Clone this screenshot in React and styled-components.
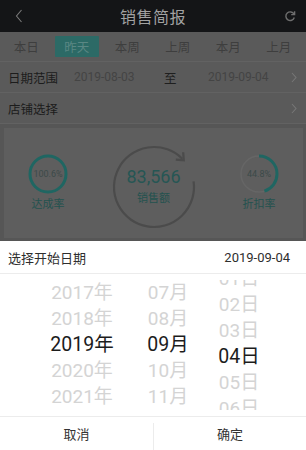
import React from "react";
import styled, { createGlobalStyle } from "styled-components";

const Global = createGlobalStyle`
  html, body { margin: 0; padding: 0; }
  body {
    width: 306px; height: 450px; overflow: hidden;
    font-family: Roboto, "Noto Sans CJK SC", "Noto Sans", sans-serif;
    background: #565656;
  }
  * { box-sizing: border-box; }
`;

const Screen = styled.div`
  width: 306px; height: 450px;
  display: flex; flex-direction: column;
  overflow: hidden;
`;

/* dimmed page under the mask */
const Page = styled.div`
  height: 241px; flex: none;
  display: flex; flex-direction: column;
  background: #565656;
  overflow: hidden;
`;

const Header = styled.div`
  height: 32px; flex: none;
  background: #141517;
  display: grid; grid-template-columns: 40px 1fr 40px;
  align-items: center;
`;
const Title = styled.div`
  text-align: center; color: #a2a2a2; font-size: 16px; letter-spacing: 0.5px;
`;
const IconCell = styled.div`
  display: flex; align-items: center;
  justify-content: ${(p) => (p.$right ? "flex-end" : "flex-start")};
  padding: ${(p) => (p.$right ? "0 10px 0 0" : "0 0 0 15px")};
`;

const Tabs = styled.div`
  height: 30px; flex: none;
  display: grid; grid-template-columns: repeat(6, 1fr);
  align-items: center;
  background: #5a5a5a;
  border-bottom: 1px solid #626262;
  padding: 0 2px 0 1px;
`;
const Tab = styled.div`
  height: 21px; margin: 0 3px;
  display: flex; align-items: center; justify-content: center;
  font-size: 12.5px;
  color: ${(p) => (p.$active ? "#5a8784" : "#3e3e3e")};
  background: ${(p) => (p.$active ? "#2c6a66" : "transparent")};
  border-radius: 1px;
`;

const Row = styled.div`
  height: 31px; flex: none;
  display: flex; align-items: center;
  padding: 0 9px 0 8px;
  background: #5a5a5a;
  border-bottom: 1px solid #626262;
  font-size: 12.5px;
`;
const Label = styled.div`
  width: 66px; color: #1c1c1c;
`;
const DateVal = styled.div`
  width: ${(p) => p.$w}px; color: #444;
  font-size: 12px;
`;
const To = styled.div`
  width: 44px; color: #1f1f1f;
`;
const Spacer = styled.div` flex: 1; `;

const Card = styled.div`
  margin: 4px 3px 0 4px;
  height: 110px; flex: none;
  background: #5e5e5e;
  display: flex; align-items: center; justify-content: space-between;
  padding: 0 9px;
`;
const Stat = styled.div`
  width: 70px;
  display: flex; flex-direction: column; align-items: center; gap: 3px;
  margin-top: -2px;
`;
const RingWrap = styled.div`
  position: relative; width: 42px; height: 42px;
`;
const RingText = styled.div`
  position: absolute; inset: 0;
  display: flex; align-items: center; justify-content: center;
  font-size: 9px; color: #3c4a49;
`;
const StatLabel = styled.div`
  font-size: 11px; color: #24524f; line-height: 14px;
`;
const Big = styled.div`
  position: relative; width: 100px; height: 100px; margin-top: 8px;
`;
const BigText = styled.div`
  position: absolute; inset: 0;
  display: flex; flex-direction: column; align-items: center; justify-content: center;
  gap: 5px; padding-bottom: 2px;
`;
const BigNum = styled.div`
  font-size: 18px; color: #265654; line-height: 20px;
`;
const BigLabel = styled.div`
  font-size: 11px; color: #24524f; line-height: 13px;
`;

/* bottom sheet */
const Sheet = styled.div`
  flex: 1; background: #fff;
  display: flex; flex-direction: column;
`;
const SheetHead = styled.div`
  height: 33px; flex: none;
  display: flex; align-items: center; justify-content: space-between;
  padding: 0 16px 0 8px;
  border-bottom: 1px solid #ececec;
  font-size: 13px; color: #2e2e2e;
`;
const Picker = styled.div`
  padding: 6px 0 6px 42px;
  display: grid; grid-template-columns: 80px 92px 50px;
`;
const Column = styled.div`
  height: 130px; overflow: hidden;
`;
const List = styled.div`
  display: flex; flex-direction: column; align-items: center;
  margin-top: ${(p) => p.$offset || 0}px;
`;
const Item = styled.div`
  height: 26px; line-height: 26px; white-space: nowrap;
  font-size: ${(p) => (p.$sel ? "19.5px" : "19px")};
  color: ${(p) => (p.$sel ? "#1c1c1c" : "#d4d4d4")};
`;
const Buttons = styled.div`
  flex: 1;
  display: grid; grid-template-columns: 153px 1fr;
  border-top: 1px solid #ececec;
`;
const Btn = styled.div`
  display: flex; align-items: center; justify-content: center;
  font-size: 13px; color: #333;
  border-left: ${(p) => (p.$divider ? "1px solid #ececec" : "none")};
  margin: ${(p) => (p.$divider ? "6px 0 0" : "0")};
  padding-bottom: ${(p) => (p.$divider ? "6px" : "0")};
`;

const Chevron = ({ color = "#767676", w = 6, h = 11 }) => (
  <svg width={w} height={h} viewBox="0 0 6 11" fill="none">
    <path d="M1 1l4 4.5L1 10" stroke={color} strokeWidth="1.1" />
  </svg>
);

const Ring = ({ pct, r = 18 }) => {
  const c = 2 * Math.PI * r;
  const len = Math.min(pct, 100) / 100 * c;
  return (
    <svg width="42" height="42" viewBox="0 0 42 42">
      <circle cx="21" cy="21" r={r} fill="none" stroke="#666" strokeWidth="1.5" />
      <circle
        cx="21" cy="21" r={r} fill="none" stroke="#1f6662" strokeWidth="3"
        strokeDasharray={`${len} ${c}`} transform="rotate(-90 21 21)"
      />
    </svg>
  );
};

const rad = (d) => (d * Math.PI) / 180;
const BigRing = () => {
  const cx = 50, cy = 50, r = 40;
  const a0 = -8, a1 = 315;
  const p0 = [cx + r * Math.cos(rad(a0)), cy + r * Math.sin(rad(a0))];
  const p1 = [cx + r * Math.cos(rad(a1)), cy + r * Math.sin(rad(a1))];
  const tip = [p1[0] + 1.5, p1[1] + 1.5];
  return (
    <svg width="100" height="100" viewBox="0 0 100 100" fill="none">
      <path
        d={`M${p0[0]} ${p0[1]} A${r} ${r} 0 1 1 ${p1[0]} ${p1[1]}`}
        stroke="#4b4b4b" strokeWidth="2.2"
      />
      <path
        d={`M${tip[0] - 0.6} ${tip[1] - 8} L${tip[0]} ${tip[1]} L${tip[0] - 8} ${tip[1] - 0.6}`}
        stroke="#4b4b4b" strokeWidth="2.2" strokeLinejoin="miter"
      />
    </svg>
  );
};

const years = ["2017年", "2018年", "2019年", "2020年", "2021年"];
const months = ["07月", "08月", "09月", "10月", "11月"];
const days = ["01日", "02日", "03日", "04日", "05日", "06日"];

export default function App() {
  const tabs = ["本日", "昨天", "本周", "上周", "本月", "上月"];
  return (
    <Screen>
      <Global />
      <Page>
        <Header>
          <IconCell>
            <svg width="8" height="14" viewBox="0 0 8 14" fill="none">
              <path d="M6.5 1L1.5 7l5 6" stroke="#7a7a7a" strokeWidth="1.1" />
            </svg>
          </IconCell>
          <Title>销售简报</Title>
          <IconCell $right>
            <svg width="12" height="12" viewBox="0 0 12 12" fill="none">
              <path d="M10 4.2A4.3 4.3 0 1 0 10.3 7.5" stroke="#6e6e6e" strokeWidth="1.4" />
              <path d="M10.6 1.2v3.4H7.2" stroke="#6e6e6e" strokeWidth="1.4" />
            </svg>
          </IconCell>
        </Header>
        <Tabs>
          {tabs.map((t, i) => (
            <Tab key={t} $active={i === 1}>{t}</Tab>
          ))}
        </Tabs>
        <Row>
          <Label>日期范围</Label>
          <DateVal $w={90}>2019-08-03</DateVal>
          <To>至</To>
          <DateVal $w={80}>2019-09-04</DateVal>
          <Spacer />
          <Chevron />
        </Row>
        <Row>
          <Label>店铺选择</Label>
          <Spacer />
          <Chevron />
        </Row>
        <Card>
          <Stat>
            <RingWrap>
              <Ring pct={100} />
              <RingText>100.6%</RingText>
            </RingWrap>
            <StatLabel>达成率</StatLabel>
          </Stat>
          <Big>
            <BigRing />
            <BigText>
              <BigNum>83,566</BigNum>
              <BigLabel>销售额</BigLabel>
            </BigText>
          </Big>
          <Stat>
            <RingWrap>
              <Ring pct={44.8} />
              <RingText>44.8%</RingText>
            </RingWrap>
            <StatLabel>折扣率</StatLabel>
          </Stat>
        </Card>
      </Page>
      <Sheet>
        <SheetHead>
          <span>选择开始日期</span>
          <span>2019-09-04</span>
        </SheetHead>
        <Picker>
          <Column>
            <List>
              {years.map((y, i) => <Item key={y} $sel={i === 2}>{y}</Item>)}
            </List>
          </Column>
          <Column>
            <List>
              {months.map((m, i) => <Item key={m} $sel={i === 2}>{m}</Item>)}
            </List>
          </Column>
          <Column>
            <List $offset={-14}>
              {days.map((d, i) => <Item key={d} $sel={i === 3}>{d}</Item>)}
            </List>
          </Column>
        </Picker>
        <Buttons>
          <Btn>取消</Btn>
          <Btn $divider>确定</Btn>
        </Buttons>
      </Sheet>
    </Screen>
  );
}
